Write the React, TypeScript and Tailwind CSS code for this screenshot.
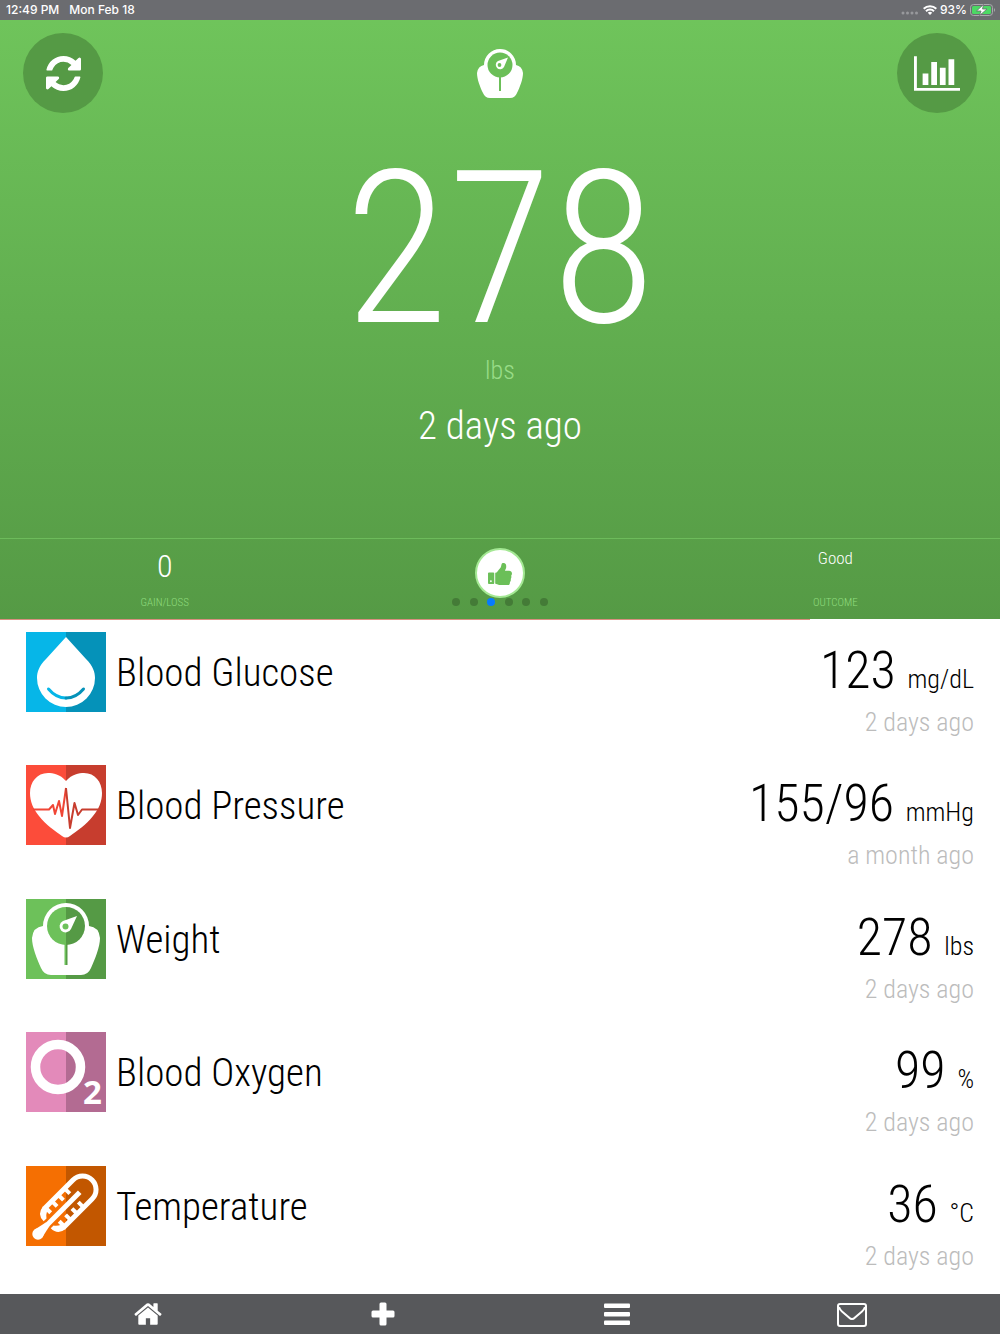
import type { ReactNode } from 'react';

interface Reading {
    name: string;
    value: string;
    unit: string;
    when: string;
    icon: ReactNode;
}

interface TileProps {
    left: string;
    right: string;
    children: ReactNode;
}

const Tile = ({ left, right, children }: TileProps) => (
    <svg viewBox="0 0 80 80" className="h-20 w-20 shrink-0" aria-hidden="true">
        <rect width="40" height="80" fill={left} />
        <rect x="40" width="40" height="80" fill={right} />
        {children}
    </svg>
);

const GlucoseIcon = () => (
    <Tile left="#06b6e8" right="#0592b9">
        <path d="M40 5L60 27C67 34 69 40 69 46A29 29 0 0 1 11 46C11 40 13 34 20 27Z" fill="#fff" />
        <path d="M22.500 57Q30 66 40 66" fill="none" stroke="#06b6e8" strokeWidth="3" strokeLinecap="round" />
        <path d="M40 66Q50 66 57.500 57" fill="none" stroke="#0592b9" strokeWidth="3" strokeLinecap="round" />
    </Tile>
);

const PressureIcon = () => (
    <Tile left="#fc4c3a" right="#c73d2e">
        <path
            d="M40 16C34 9 27 8 22 8C11 8 4 17 4 28C4 36 7 44 13 51C20 60 29 66 36 71Q40 74 44 71C51 66 60 60 67 51C73 44 76 36 76 28C76 17 69 8 58 8C53 8 46 9 40 16Z"
            fill="#fff"
        />
        <path d="M7 44.500H23L27 40L29 49L33 36L36 51L40 23" fill="none" stroke="#f04636" strokeWidth="2" strokeLinejoin="round" />
        <path d="M40 23L44 63L48.500 38L52 50L56 44.500H72" fill="none" stroke="#c73d2e" strokeWidth="2" strokeLinejoin="round" />
    </Tile>
);

const WeightIcon = () => (
    <Tile left="#6dc15a" right="#559a45">
        <path
            d="M17 27A23 23 0 0 1 63 27Q73 28 74 39C74 48 69 60 65 69Q62 76 55 76H25Q18 76 15 69C11 60 6 48 6 39Q7 28 17 27Z"
            fill="#fff"
        />
        <path d="M40 8A19 19 0 0 0 40 46Z" fill="#6dc15a" />
        <path d="M40 8A19 19 0 0 1 40 46Z" fill="#559a45" />
        <path d="M38.500 45H40V66H38.500Z" fill="#6dc15a" />
        <path d="M40 45H41.500V66H40Z" fill="#559a45" />
        <path d="M51 17L37 22A6 6 0 1 0 45 30Z" fill="#fff" />
        <circle cx="39.500" cy="27.500" r="3" fill="#6dc15a" />
    </Tile>
);

const OxygenIcon = () => (
    <Tile left="#e38aba" right="#b36b92">
        <circle cx="32" cy="35" r="22.500" fill="none" stroke="#fff" strokeWidth="9.500" />
        <text x="66.500" y="71.500" textAnchor="middle" fontSize="33" fontWeight="700" fill="#fff" className="font-['Open_Sans',sans-serif]">
            2
        </text>
    </Tile>
);

const TemperatureIcon = () => (
    <Tile left="#f56f02" right="#c25700">
        <g transform="translate(12 68) rotate(-45)" fill="none" stroke="#fff">
            <circle cx="0" cy="0" r="5.700" fill="#fff" stroke="none" />
            <path d="M0 -5.500L14 -2.500V2.500L0 5.500Z" fill="#fff" stroke="none" />
            <path d="M10 0H59" strokeWidth="5" />
            <path d="M22 -13.500H63A13.500 13.500 0 0 1 63 13.500H22" strokeWidth="5" />
            <path d="M13 -5Q13 -15 23 -16V-10Q19 -8 17 -5ZM13 5Q13 15 23 16V10Q19 8 17 5Z" fill="#fff" stroke="none" />
            <path d="M24 -12V-6M33 -12V-6M42 -12V-6M51 -12V-6M24 12V6M33 12V6M42 12V6M51 12V6" strokeWidth="4" />
        </g>
    </Tile>
);

const readings: Reading[] = [
    { name: 'Blood Glucose', value: '123', unit: 'mg/dL', when: '2 days ago', icon: <GlucoseIcon /> },
    { name: 'Blood Pressure', value: '155/96', unit: 'mmHg', when: 'a month ago', icon: <PressureIcon /> },
    { name: 'Weight', value: '278', unit: 'lbs', when: '2 days ago', icon: <WeightIcon /> },
    { name: 'Blood Oxygen', value: '99', unit: '%', when: '2 days ago', icon: <OxygenIcon /> },
    { name: 'Temperature', value: '36', unit: '°C', when: '2 days ago', icon: <TemperatureIcon /> },
];

const pages = ['Blood Glucose', 'Blood Pressure', 'Weight', 'Blood Oxygen', 'Temperature', 'Activity'];

const StatusBar = () => (
    <div className="flex h-5 items-center justify-between bg-[#6b6c70] pl-1.5 pr-1 font-['Inter',sans-serif] text-xs font-medium text-white">
        <div className="flex gap-2.5">
            <span>12:49 PM</span>
            <span>Mon Feb 18</span>
        </div>
        <div className="flex items-center gap-[3px]">
            <svg viewBox="0 0 18 4" className="mr-px mt-1.5 h-1 w-[18px]" fill="#98999c" aria-hidden="true">
                <circle cx="2" cy="2" r="1.500" />
                <circle cx="6.500" cy="2" r="1.500" />
                <circle cx="11" cy="2" r="1.500" />
                <circle cx="15.500" cy="2" r="1.500" />
            </svg>
            <svg viewBox="0 0 14 10" className="h-2.5 w-3.5" fill="none" stroke="#fff" strokeWidth="2" aria-hidden="true">
                <path d="M0.700 3.700A9 9 0 0 1 13.300 3.700M3 6.200A5.600 5.600 0 0 1 11 6.200" />
                <path d="M7 10L4.800 7.800A3.200 3.200 0 0 1 9.200 7.800Z" fill="#fff" stroke="none" />
            </svg>
            <span>93%</span>
            <svg viewBox="0 0 26 12" className="h-3 w-[26px]" aria-hidden="true">
                <rect x="0.500" y="0.500" width="22" height="11" rx="3" fill="none" stroke="#a9aaac" />
                <rect x="2" y="2" width="19" height="8" rx="1.500" fill="#4cd964" />
                <path d="M24 4Q26 6 24 8Z" fill="#a9aaac" />
                <path d="M13.500 0.500L6.500 7H11L9.500 11.500L17 5H12.500Z" fill="#fff" stroke="#6b6c70" strokeWidth="0.800" />
            </svg>
        </div>
    </div>
);

const Hero = () => (
    <section className="flex flex-col bg-linear-to-b from-[#6fc45b] to-[#559a45] text-white">
        <div className="flex items-start justify-between px-[23px] pt-[13px]">
            <button aria-label="Refresh" className="flex h-20 w-20 items-center justify-center rounded-full bg-[#559a45]">
                <svg viewBox="0 0 1536 1536" className="h-[35px] w-[35px]" fill="currentColor" aria-hidden="true">
                    <path d="M1511 928q0 5-1 7-64 268-268 434.500t-478 166.500q-146 0-282.500-55t-243.500-157l-129 129q-19 19-45 19t-45-19-19-45v-448q0-26 19-45t45-19h448q26 0 45 19t19 45-19 45l-137 137q71 66 161 102t187 36q134 0 250-65t186-179q11-17 53-117 8-23 30-23h192q13 0 22.500 9.500t9.500 22.500zm25-800v448q0 26-19 45t-45 19h-448q-26 0-45-19t-19-45 19-45l138-138q-148-137-349-137-134 0-250 65t-186 179q-11 17-53 117-8 23-30 23h-199q-13 0-22.500-9.500t-9.500-22.500v-7q65-268 270-434.500t480-166.500q146 0 284 55.500t245 156.500l130-129q19-19 45-19t45 19 19 45z" />
                </svg>
            </button>
            <svg viewBox="0 0 46 50" className="mt-[15px] h-[50px] w-[46px]" aria-hidden="true">
                <path d="M7 17A16 16 0 0 1 39 17Q45 18 46 25C46 31 43 39 40 45Q38 50 33 50H13Q8 50 6 45C3 39 0 31 0 25Q1 18 7 17Z" fill="#fff" />
                <circle cx="23" cy="17" r="12.500" fill="#6bbf58" />
                <path d="M22 29H24V43H22Z" fill="#6bbf58" />
                <path d="M31 9.500L21 13A4.400 4.400 0 1 0 27 19Z" fill="#fff" />
                <circle cx="22.500" cy="17" r="1.900" fill="#6bbf58" />
            </svg>
            <button aria-label="Statistics" className="flex h-20 w-20 items-center justify-center rounded-full bg-[#559a45]">
                <svg viewBox="0 0 2048 1536" className="h-[35px] w-[46px]" fill="currentColor" aria-hidden="true">
                    <path d="M640 768v512h-256v-512h256zm384-512v1024h-256v-1024h256zm1024 1152v128h-2048v-1536h128v1408h1920zm-640-896v768h-256v-768h256zm384-384v1152h-256v-1152h256z" />
                </svg>
            </button>
        </div>
        <div className="mt-[31px] flex flex-col items-center">
            <p className="text-[213px] leading-[210px]">278</p>
            <p className="text-[26px] leading-8 text-[#98dc87]">lbs</p>
            <h1 className="mt-4 text-[39px] leading-[48px]">2 days ago</h1>
        </div>
        <div className="mt-[88px] grid h-[81px] grid-cols-3 border-t border-[#6dbb5b] text-center">
            <div className="pr-1 pt-[7px]">
                <p className="text-[32px] leading-10">0</p>
                <p className="mt-2 text-[11px] leading-[18px] text-[#90dc7e]">GAIN/LOSS</p>
            </div>
            <div className="flex flex-col items-center pt-[9px]">
                <button aria-label="Like" className="flex h-[50px] w-[50px] shrink-0 items-center justify-center rounded-full border-2 border-[#a4e894] bg-white">
                    <svg viewBox="0 0 1600 1536" className="h-[23px] w-6" fill="#6bbf58" aria-hidden="true">
                        <path d="M256 1280q0-26-19-45t-45-19-45 19-19 45 19 45 45 19 45-19 19-45zm160-512v640q0 26-19 45t-45 19h-288q-26 0-45-19t-19-45v-640q0-26 19-45t45-19h288q26 0 45 19t19 45zm1184 0q0 86-55 149 15 44 15 76 3 76-43 137 17 56 0 117-15 57-54 94 9 112-49 181-64 76-197 78h-129q-66 0-144-15.500t-121.500-29-120.500-39.500q-123-43-158-44-26-1-45-19.500t-19-44.500v-641q0-25 18-43.500t43-20.500q24-2 76-59t101-121q68-87 101-120 18-18 31-48t17.500-48.500 13.500-60.500q7-39 12.500-61t19.500-52 34-50q19-19 45-19 46 0 82.500 10.500t60 26 40 40.500 24 45 12 50 5 45 .5 39q0 38-9.500 76t-19 60-27.500 56q-3 6-10 18t-11 22-8 24h277q78 0 135 57t57 135z" />
                    </svg>
                </button>
                <div className="flex w-24 justify-between">
                    {pages.map((page) => (
                        <button
                            key={page}
                            aria-label={page}
                            className={page === 'Weight' ? 'h-2 w-2 rounded-full bg-[#067bff]' : 'h-2 w-2 rounded-full bg-[#447b37]'}
                        />
                    ))}
                </div>
            </div>
            <div className="pl-1 pt-[7px]">
                <p className="h-10 text-[17px] leading-6">Good</p>
                <p className="mt-2 text-[11px] leading-[18px] text-[#90dc7e]">OUTCOME</p>
            </div>
        </div>
    </section>
);

const ReadingRow = ({ name, value, unit, when, icon }: Reading) => (
    <li className="flex flex-1 items-start gap-2.5 px-[26px] pt-3">
        {icon}
        <h2 className="flex-1 text-[39px] leading-[82px]">{name}</h2>
        <div className="flex flex-col text-right">
            <p className="mt-3 text-[52px] leading-[54px]">
                {value} <span className="text-[26px]">{unit}</span>
            </p>
            <p className="text-[26px] leading-8 text-[#bcbcbc]">{when}</p>
        </div>
    </li>
);

const NavBar = () => (
    <nav className="flex h-10 items-center justify-around bg-[#57585b] px-[31px] text-white">
        <button aria-label="Home" className="flex h-10 flex-1 items-center justify-center">
            <svg viewBox="0 192 1664 1408" className="h-6 w-7" fill="currentColor" aria-hidden="true">
                <path d="M1408 992v480q0 26-19 45t-45 19h-384v-384h-256v384h-384q-26 0-45-19t-19-45v-480q0-1 .5-3t.5-3l575-474 575 474q1 2 1 6zm223-69l-62 74q-8 9-21 11h-3q-13 0-21-7l-692-577-692 577q-12 8-24 7-13-2-21-11l-62-74q-8-10-7-23.500t11-21.500l719-599q32-26 76-26t76 26l244 204v-195q0-14 9-23t23-9h192q14 0 23 9t9 23v408l219 182q10 8 11 21.500t-7 23.500z" />
            </svg>
        </button>
        <button aria-label="Add" className="flex h-10 flex-1 items-center justify-center">
            <svg viewBox="0 0 24 24" className="h-6 w-6" fill="currentColor" aria-hidden="true">
                <rect x="8.500" y="0.500" width="7" height="23" rx="1.500" />
                <rect x="0.500" y="8.500" width="23" height="7" rx="1.500" />
            </svg>
        </button>
        <button aria-label="Menu" className="flex h-10 flex-1 items-center justify-center">
            <svg viewBox="0 0 26 22" className="h-[22px] w-[26px]" fill="currentColor" aria-hidden="true">
                <rect y="0.500" width="26" height="4.500" rx="1" />
                <rect y="9" width="26" height="4.500" rx="1" />
                <rect y="17.500" width="26" height="4.500" rx="1" />
            </svg>
        </button>
        <button aria-label="Messages" className="flex h-10 flex-1 items-center justify-center pt-0.5">
            <svg viewBox="0 0 30 24" className="h-6 w-[30px]" fill="none" stroke="currentColor" strokeWidth="2" aria-hidden="true">
                <rect x="1" y="1" width="28" height="22" rx="2" />
                <path d="M2 4Q3 7 5 8.500L12 14.500Q15 17.500 18 14.500L25 8.500Q27 7 28 4" />
            </svg>
        </button>
    </nav>
);

const App = () => (
    <div className="flex min-h-screen flex-col bg-white font-['Roboto_Condensed','Roboto',sans-serif] font-light text-black">
        <StatusBar />
        <Hero />
        {/* Sync progress */}
        <div className="h-px w-[81%] bg-[#d98f80]" />
        <ul className="flex flex-1 flex-col pb-[7px]">
            {readings.map((reading) => (
                <ReadingRow key={reading.name} {...reading} />
            ))}
        </ul>
        <NavBar />
    </div>
);

export default App;
